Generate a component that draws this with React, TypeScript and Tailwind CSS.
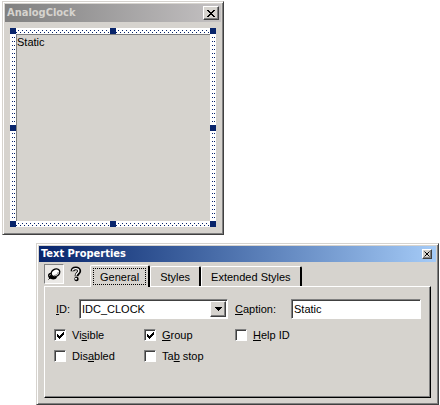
import React, { useState } from 'react';

const RAISED =
  'border border-t-white border-l-white border-r-[#404040] border-b-[#404040] shadow-[inset_-1px_-1px_0_#808080]';
const SUNKEN =
  'border border-t-[#808080] border-l-[#808080] border-r-white border-b-white shadow-[inset_1px_1px_0_#404040]';
const FRAME =
  'border border-t-[#d6d3ce] border-l-[#d6d3ce] border-r-[#404040] border-b-[#404040] bg-[#d6d3ce] p-0.5 shadow-[inset_1px_1px_0_#fff,inset_-1px_-1px_0_#808080]';

const TABS = ['General', 'Styles', 'Extended Styles'];

const HANDLES = [
  'left-0 top-0',
  'left-1/2 top-0 -translate-x-1/2',
  'right-0 top-0',
  'left-0 top-1/2 -translate-y-1/2',
  'right-0 top-1/2 -translate-y-1/2',
  'left-0 bottom-0',
  'left-1/2 bottom-0 -translate-x-1/2',
  'right-0 bottom-0',
];

function CloseGlyph({ small }: { small?: boolean }) {
  return small ? (
    <svg width="6" height="6" viewBox="0 0 6 6" aria-hidden>
      <path d="M.5 .5L5.5 5.5M5.5 .5L.5 5.5" stroke="#000" strokeWidth="1" />
    </svg>
  ) : (
    <svg width="8" height="7" viewBox="0 0 8 7" shapeRendering="crispEdges" aria-hidden>
      <path d="M0 0h2v1h1v1h2V1h1V0h2v1H7v1H6v1H5v1h1v1h1v1h1v1H6V6H5V5H3v1H2v1H0V6h1V5h1V4h1V3H2V2H1V1H0z" fill="#000" />
    </svg>
  );
}

function PinIcon() {
  return (
    <svg width="16" height="16" viewBox="0 0 16 16" aria-hidden>
      <path d="M2.5 13.5L4.500 11.500" stroke="#000" strokeWidth="1" />
      <path d="M2 9.500C2 7.500 4 6.500 6 7L11 11.500C10 13.500 7 14 5 13C3 12.500 2 11 2 9.500z" fill="#000" />
      <path d="M3.500 9.500C3.800 8.500 5 8.300 6 9" fill="none" stroke="#d6d3ce" />
      <ellipse cx="9.500" cy="6.800" rx="4.500" ry="3.600" fill="#fff" stroke="#000" strokeWidth="1.400" transform="rotate(-35 9.500 6.800)" />
      <path d="M7.500 9.500C9.500 9.800 11.800 8.300 12.300 6" fill="none" stroke="#808080" />
    </svg>
  );
}

function HelpIcon() {
  return (
    <svg width="12" height="16" viewBox="0 0 12 16" aria-hidden>
      <path d="M2.500 5.300C2.500 1.500 9.300 1.500 9.300 5C9.300 7.300 6.500 7.300 6.500 10.300" fill="none" stroke="#000" strokeWidth="3.800" />
      <circle cx="6.500" cy="13" r="2.200" fill="#000" />
      <path d="M2.500 4.800C2.800 2 8.800 1.800 8.800 5C8.800 7 6 7.200 6 9.800" fill="none" stroke="#fff" strokeWidth="1.300" />
      <circle cx="6" cy="12.800" r="1" fill="#fff" />
    </svg>
  );
}

function HatchStrips() {
  return (
    <>
      {['top-0', 'bottom-0'].map(side => (
        <svg key={side} className={`absolute left-0 h-1.5 w-full ${side}`} shapeRendering="crispEdges" aria-hidden>
          <pattern id={`hatch-${side}`} width="4" height="6" patternUnits="userSpaceOnUse">
            <path d="M0 2h1v1H0zM2 4h1v1H2z" fill="#08246b" />
          </pattern>
          <rect width="100%" height="6" fill={`url(#hatch-${side})`} />
        </svg>
      ))}
      {['left-0', 'right-0'].map(side => (
        <svg key={side} className={`absolute top-0 h-full w-1.5 ${side}`} shapeRendering="crispEdges" aria-hidden>
          <pattern id={`hatch-${side}`} width="6" height="4" patternUnits="userSpaceOnUse">
            <path d="M2 1h1v1H2zM4 1h1v1H4z" fill="#08246b" />
          </pattern>
          <rect y="6" width="6" height="100%" fill={`url(#hatch-${side})`} />
        </svg>
      ))}
    </>
  );
}

interface CheckFieldProps {
  before?: string;
  hotkey: string;
  after: string;
  checked?: boolean;
}

function CheckField({ before, hotkey, after, checked = false }: CheckFieldProps) {
  return (
    <label className="flex items-center gap-1.5">
      <span className="grid size-3 shrink-0">
        <input
          type="checkbox"
          defaultChecked={checked}
          className={`peer col-start-1 row-start-1 size-3 appearance-none bg-white ${SUNKEN}`}
        />
        <svg
          className="pointer-events-none invisible col-start-1 row-start-1 size-3 peer-checked:visible"
          viewBox="0 0 12 12"
          shapeRendering="crispEdges"
          aria-hidden
        >
          <path d="M3 5v3h1v1h1v1h1V9h1V8h1V7h1V6h1V3H9v1H8v1H7v1H6v1H5V6H4V5z" fill="#000" />
        </svg>
      </span>
      <span>
        {before}
        <u>{hotkey}</u>
        {after}
      </span>
    </label>
  );
}

function ClockWindow() {
  return (
    <section className={`w-[222px] ${FRAME}`} aria-label="AnalogClock">
      <header className="flex h-[18px] items-center justify-between bg-linear-to-r from-[#808080] to-[#c4c1c2] px-0.5">
        <h1 className="font-['DejaVu_Sans_Condensed','DejaVu_Sans',sans-serif] text-[11px] font-bold text-[#d6d3ce]">
          AnalogClock
        </h1>
        <button type="button" aria-label="Close" className={`flex h-3.5 w-4 items-center justify-center bg-[#d6d3ce] ${RAISED}`}>
          <CloseGlyph />
        </button>
      </header>
      <div className="px-[5px] pt-1.5 pb-[5px]">
        <div className="relative bg-white p-1.5">
          <HatchStrips />
          <p className="h-[187px] border-t border-l border-[#808080] bg-[#d6d3ce] pt-px leading-3">Static</p>
          {HANDLES.map(place => (
            <span key={place} className={`absolute size-1.5 bg-[#08246b] ${place}`} />
          ))}
        </div>
      </div>
    </section>
  );
}

function PropertiesWindow() {
  const [tab, setTab] = useState('General');

  return (
    <section className={FRAME} aria-label="Text Properties">
      <header className="flex h-4 items-center justify-between bg-linear-to-r from-[#08246b] to-[#a5cbf7] pr-1 pl-0.5">
        <h2 className="font-['DejaVu_Sans_Condensed','DejaVu_Sans',sans-serif] text-[11px] font-bold text-white">
          Text Properties
        </h2>
        <button type="button" aria-label="Close" className={`flex size-2.5 items-center justify-center bg-[#d6d3ce] ${RAISED}`}>
          <CloseGlyph small />
        </button>
      </header>

      <div className="px-[5px] pt-0.5 pb-1">
        <div className="flex h-[22px] items-end">
          <button
            type="button"
            aria-label="Keep visible"
            className="flex size-5 items-center justify-center self-start border border-t-[#808080] border-l-[#808080] border-r-white border-b-white bg-[#ebe9e6]"
          >
            <PinIcon />
          </button>
          <button type="button" aria-label="Help" className="mr-1 ml-0.5 flex size-5 items-center justify-center self-start">
            <HelpIcon />
          </button>
          <div role="tablist" className="flex items-end">
            {TABS.map(name => (
              <button
                key={name}
                type="button"
                role="tab"
                aria-selected={tab === name}
                onClick={() => setTab(name)}
                className={`rounded-t-xs border-t border-r-2 border-l border-t-white border-r-black border-l-white px-[9px] ${
                  tab === name ? 'relative -mb-px h-[22px] bg-[#d6d3ce]' : 'h-5'
                }`}
              >
                {name}
                {tab === name && <span className="absolute inset-0.5 border border-dotted border-black" />}
              </button>
            ))}
          </div>
        </div>

        <div className="h-28 border border-t-white border-l-white border-r-black border-b-black px-[9px] pt-3 shadow-[inset_-1px_-1px_0_#808080]">
          <div className="flex items-center">
            <label htmlFor="control-id" className="w-[25px] pl-0.5">
              <u>I</u>D:
            </label>
            <div className={`flex h-5 w-[149px] bg-white p-px ${SUNKEN}`}>
              <select id="control-id" className="min-w-0 flex-1 appearance-none bg-transparent pl-px">
                <option>IDC_CLOCK</option>
              </select>
              <span className={`pointer-events-none flex w-4 items-center justify-center bg-[#d6d3ce] ${RAISED}`}>
                <svg width="7" height="4" viewBox="0 0 7 4" shapeRendering="crispEdges" aria-hidden>
                  <path d="M0 0h7v1H6v1H5v1H4v1H3V3H2V2H1V1H0z" fill="#000" />
                </svg>
              </span>
            </div>
            <label htmlFor="caption" className="ml-[7px] w-14">
              <u>C</u>aption:
            </label>
            <input
              id="caption"
              defaultValue="Static"
              className={`h-5 min-w-0 flex-1 bg-white px-0.5 ${SUNKEN}`}
            />
          </div>
          <div className="mt-2 grid grid-cols-[90px_91px_1fr] gap-y-[5px] leading-4">
            <CheckField before="Vi" hotkey="s" after="ible" checked />
            <CheckField hotkey="G" after="roup" checked />
            <CheckField hotkey="H" after="elp ID" />
            <CheckField before="Dis" hotkey="a" after="bled" />
            <CheckField before="Ta" hotkey="b" after=" stop" />
          </div>
        </div>
      </div>
    </section>
  );
}

export default function App() {
  return (
    <main className="min-h-screen bg-white pt-px font-['Liberation_Sans',Arial,sans-serif] text-[11px] leading-4 text-black">
      <div className="pl-0.5">
        <ClockWindow />
      </div>
      <div className="mt-2 pr-px pl-9">
        <PropertiesWindow />
      </div>
    </main>
  );
}
